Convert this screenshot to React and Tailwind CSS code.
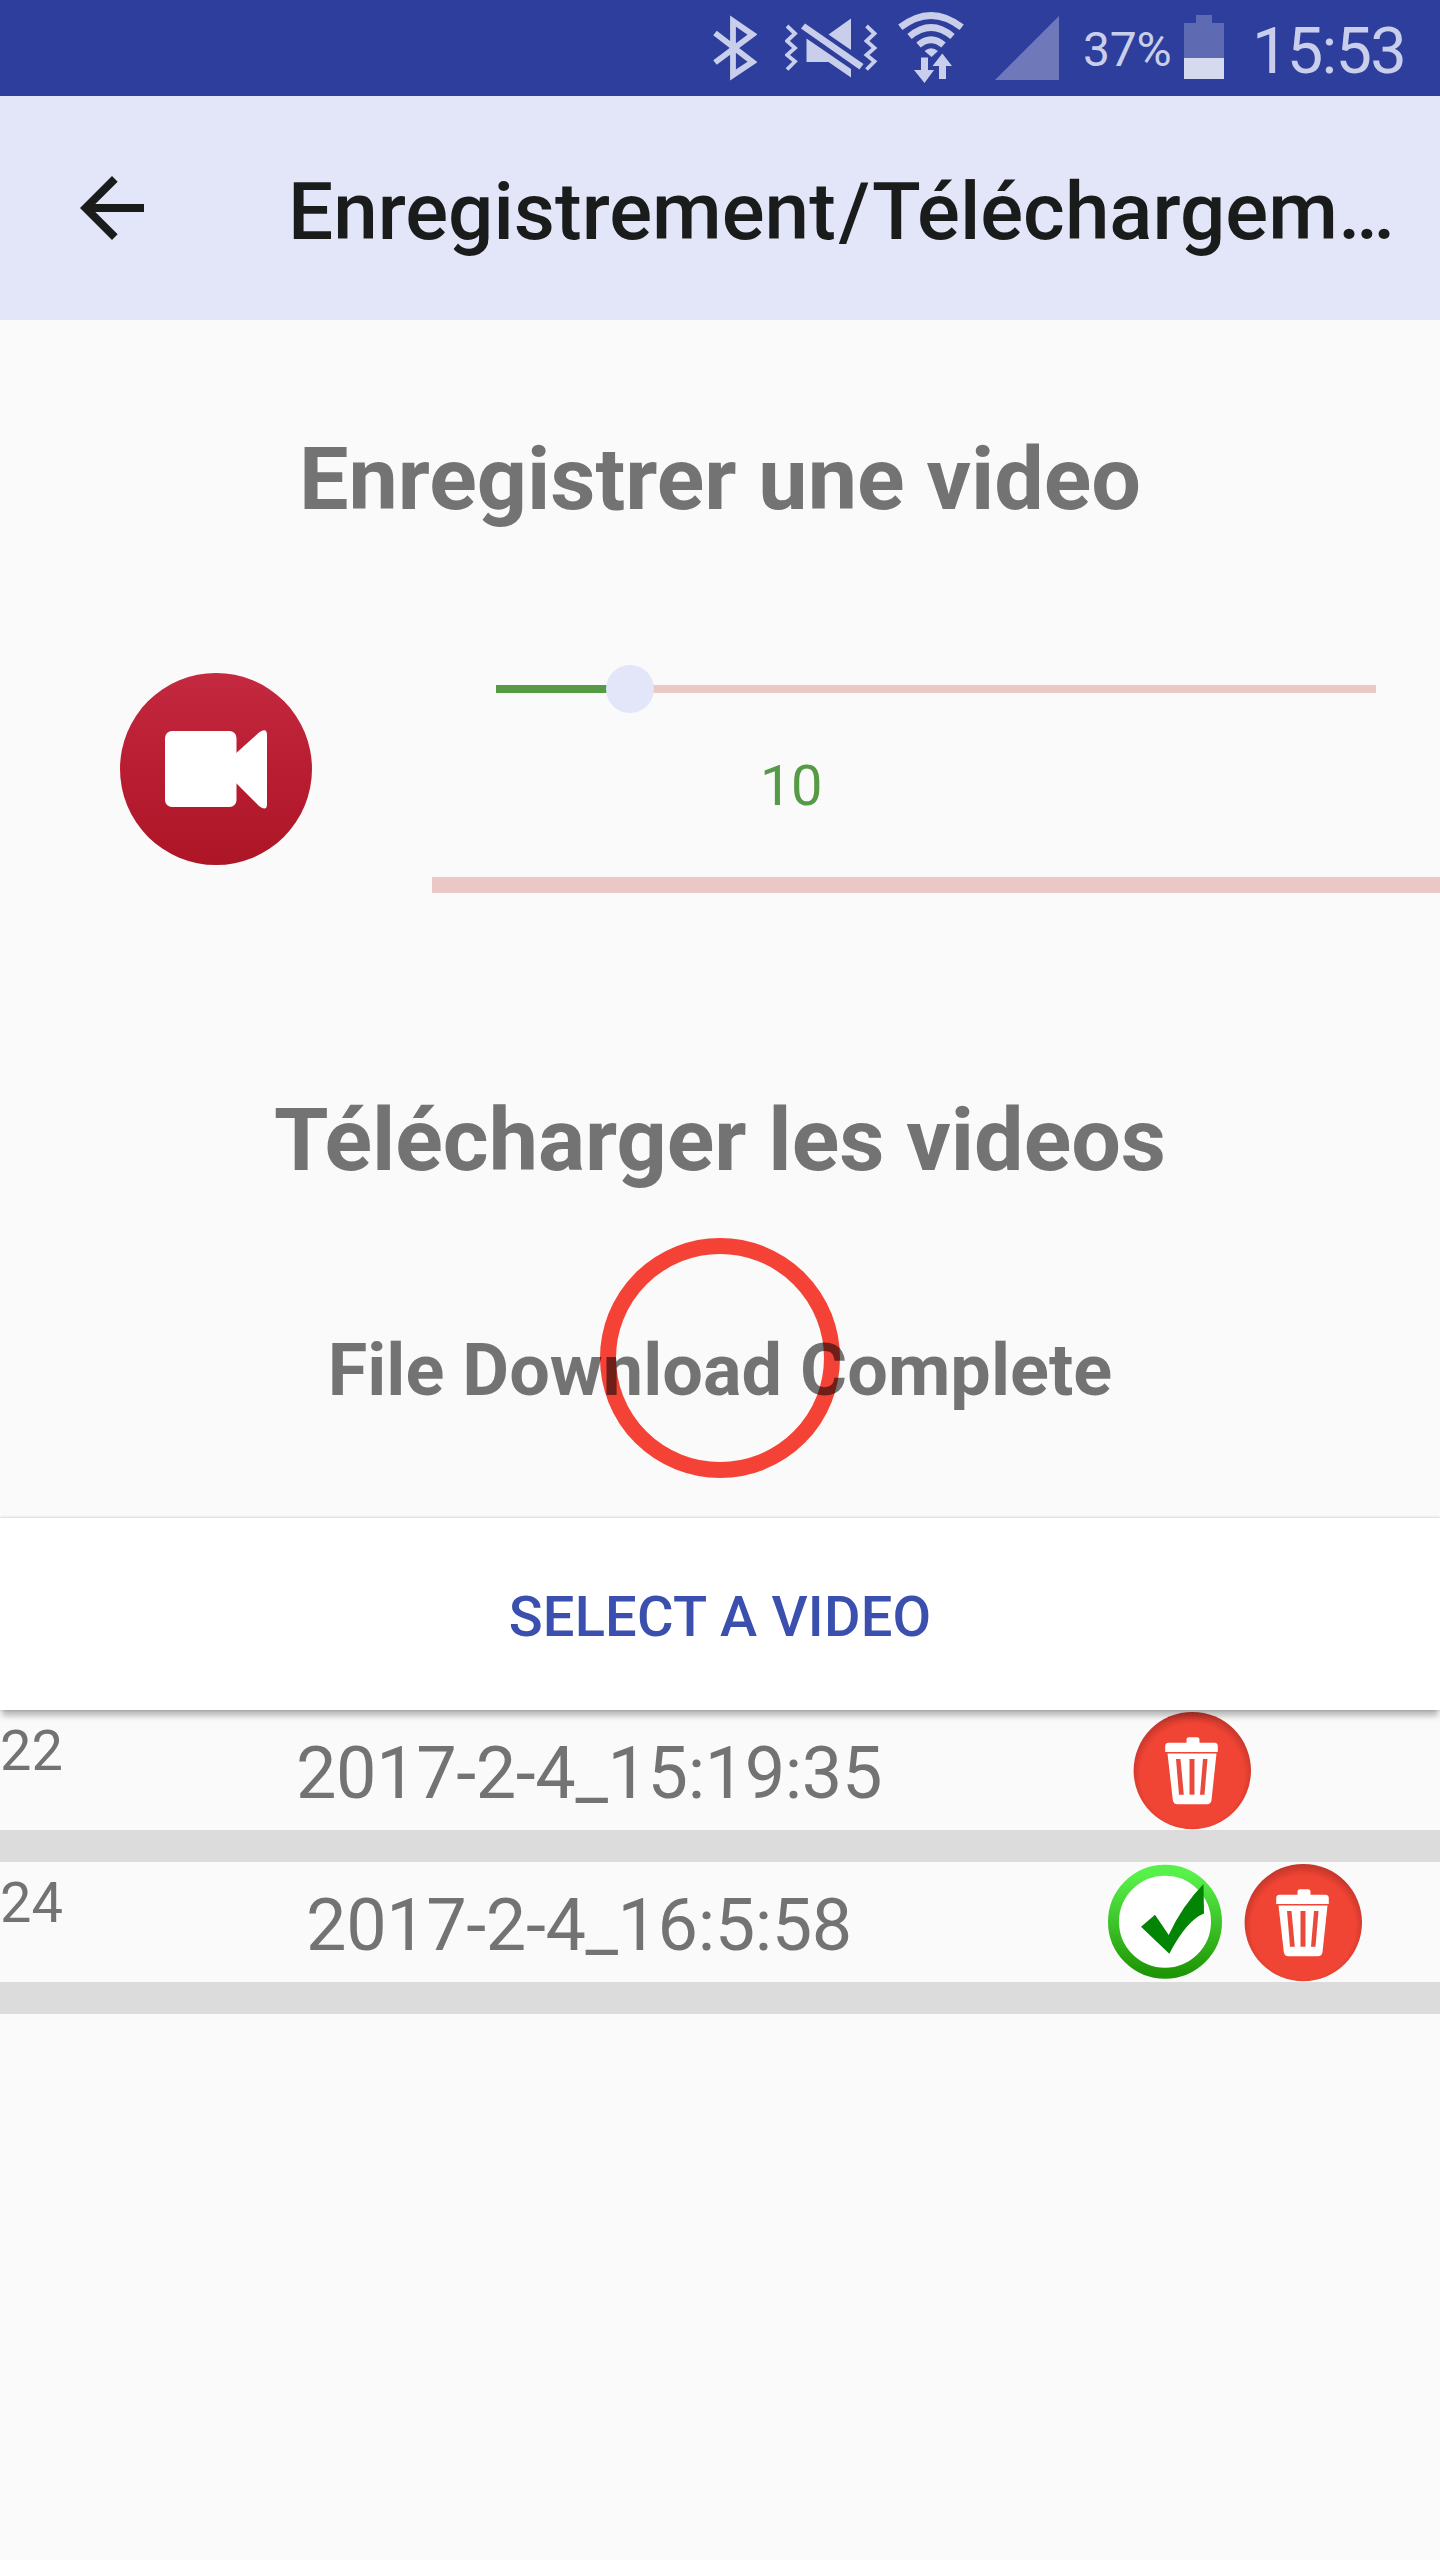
import React from "react";

function BluetoothIcon() {
  return (
    <svg className="h-24 w-[44px]" viewBox="713 0 44 96" fill="none" stroke="#c9cfeb" strokeWidth="5.8" strokeLinejoin="miter">
      <path d="M715 33L752.5 62L733 75V21L752.5 34.5L715 62.5" />
    </svg>
  );
}

function VibrateMuteIcon() {
  return (
    <svg className="ml-[28px] h-24 w-[93px]" viewBox="785 0 93 96" fill="none">
      <g stroke="#c9cfeb" strokeWidth="3.8">
        <path d="M787 26L795 33.5L787 41L795 48L787 55L795 61.5L787 69.5" />
        <path d="M866.500 26L874.500 33.500L866.500 41L874.500 48L866.500 55L874.500 61.500L866.500 69.500" />
      </g>
      <g fill="#c9cfeb">
        <path d="M801 28.500L805 23.500L863.500 64L859.500 69.500Z" />
        <path d="M806.500 38.500L851 69V77.500L828.500 62H806.500Z" />
        <path d="M851 18.500V50L828.500 34.500Z" />
      </g>
    </svg>
  );
}

function WifiIcon() {
  return (
    <svg className="ml-[20px] h-24 w-[66px]" viewBox="898 0 66 96" fill="none">
      <g stroke="#c9cfeb" strokeWidth="6.800">
        <path d="M900.300 27.300Q931 3.500 961.700 27.300" />
        <path d="M909.500 36.500Q931 18.500 952.500 36.500" />
        <path d="M918.500 45Q931 34.500 943.500 45" />
      </g>
      <g fill="#c9cfeb">
        <path d="M924.500 51Q931 45.500 938 51L931.500 57Z" />
        <path d="M921 57.500H928V70H934L924.500 83L914 70H921Z" />
        <path d="M939 79V66H932.500L942.300 53.500L952 66H946V79Z" />
      </g>
    </svg>
  );
}

function StatusBar() {
  return (
    <header className="flex h-24 items-center bg-[#2d3e9d] pl-[713px] text-[#c9cfeb]">
      <BluetoothIcon />
      <VibrateMuteIcon />
      <WifiIcon />
      <svg className="ml-[31px] h-24 w-[64px]" viewBox="995 0 64 96">
        <path d="M995 80L1059 16V80Z" fill="#6f79b9" />
      </svg>
      <span className="ml-[24px] w-[101px] pt-[3px] text-[48px] leading-[60px] tracking-[-0.2px]">37%</span>
      <svg className="h-24 w-10" viewBox="1184 0 40 96">
        <path d="M1184 23H1196V15H1212V23H1224V58H1184Z" fill="#5e6bb2" />
        <path d="M1184 58H1224V79H1184Z" fill="#d5daef" />
      </svg>
      <span className="ml-[28px] pt-[5px] text-[65px] leading-[80px] tracking-[-1.8px]">15:53</span>
    </header>
  );
}

function AppBar() {
  return (
    <div className="flex h-[224px] items-center bg-[#e3e6f9] pl-16 text-[#1a1c1c]">
      <svg className="size-24" viewBox="0 0 24 24" fill="currentColor">
        <path d="M20 11H7.830l5.590-5.590L12 4l-8 8 8 8 1.410-1.410L7.830 13H20v-2z" />
      </svg>
      <h1 className="ml-[128px] pt-[8px] text-[80px] font-medium leading-[96px] whitespace-nowrap">
        Enregistrement<span className="ml-[3px] tracking-[2px]">/</span>Téléchargem…
      </h1>
    </div>
  );
}

function RecordButton() {
  return (
    <svg className="mt-[4px] ml-[120px] size-48 shrink-0" viewBox="0 0 192 192">
      <defs>
        <linearGradient id="record" x1="0" y1="0" x2="0" y2="1">
          <stop offset="0" stopColor="#c3293f" />
          <stop offset="0.5" stopColor="#b91d32" />
          <stop offset="1" stopColor="#ad1626" />
        </linearGradient>
      </defs>
      <circle cx="96" cy="96" r="96" fill="url(#record)" />
      <rect x="45" y="58" width="71.500" height="76" rx="7" fill="#fff" />
      <path d="M114 82L139 59.500Q147 54 147 62V131Q147 139 139 133L114 108Z" fill="#fff" />
    </svg>
  );
}

function Slider({ percent }) {
  return (
    <div className="relative ml-16 flex h-12 w-[880px] items-center">
      <div className="h-2 w-full bg-[#e9c8c6]">
        <div className="h-full bg-[#559a45]" style={{ width: `${percent}%` }} />
      </div>
      <div className="absolute size-12 -translate-x-1/2 rounded-full bg-[#e3e6f9]" style={{ left: `${percent}%` }} />
    </div>
  );
}

function TrashIcon() {
  return (
    <svg className="size-[120px]" viewBox="0 0 120 120">
      <defs>
        <radialGradient id="trash" cx="0.5" cy="0.54" r="0.54">
          <stop offset="0.820" stopColor="#f04434" />
          <stop offset="1" stopColor="#c0352b" />
        </radialGradient>
      </defs>
      <circle cx="60.300" cy="60.600" r="58.700" fill="url(#trash)" />
      <g fill="#fff">
        <path d="M54.500 33V29.500Q54.500 27.300 57 27.300H65Q67.500 27.300 67.500 29.500V33Z" />
        <path d="M36.500 32.700H82.500Q85.500 32.700 85.800 36V42H33.200V36Q33.500 32.700 36.500 32.700Z" />
        <path d="M35.500 43.500H84.500L79.500 90Q78.800 94.300 75 94.300H45.500Q41.500 94.300 40.800 90Z" />
      </g>
      <g fill="#e94a3c">
        <path d="M44 49H48.500L51.800 84.700H47Z" />
        <path d="M57.500 49H62.500V84.700H57.500Z" />
        <path d="M71 49H75.500L72.500 84.700H68Z" />
      </g>
    </svg>
  );
}

function CheckIcon() {
  return (
    <svg className="mr-[18px] size-[120px]" viewBox="0 0 120 120">
      <defs>
        <linearGradient id="check" x1="0" y1="0" x2="0" y2="1">
          <stop offset="0.050" stopColor="#58f04a" />
          <stop offset="1" stopColor="#1f9605" />
        </linearGradient>
      </defs>
      <circle cx="60" cy="59.700" r="51.500" fill="#fff" stroke="url(#check)" strokeWidth="11" />
      <path d="M36 64.700L50 52.700L63.700 73Q77 44 98.500 22L99 51.500Q82 58 64.300 91.700Z" fill="#048404" />
    </svg>
  );
}

const videos = [
  { id: "22", name: "2017-2-4_15:19:35", saved: false, nameClass: "ml-[100px] w-[978px]", actionsClass: "ml-[54px]" },
  { id: "24", name: "2017-2-4_16:5:58", saved: true, nameClass: "ml-[100px] w-[958px]", actionsClass: "ml-[47px]" },
];

function VideoRow({ video }) {
  return (
    <li className="flex h-[152px] items-start border-b-[32px] border-[#dcdcdc] text-[#737373]">
      <span className="-mr-[100px] w-[100px] pt-[9px] text-[56px] leading-[64px]">{video.id}</span>
      <span className={`${video.nameClass} pt-[22px] text-center text-[72px] leading-[84px] tracking-[-0.4px]`}>
        {video.name}
      </span>
      <div className={`${video.actionsClass} flex`}>
        {video.saved && <CheckIcon />}
        <TrashIcon />
      </div>
    </li>
  );
}

export default function App() {
  return (
    <div className="flex h-[2560px] w-[1440px] flex-col overflow-hidden bg-[#fafafa] font-['Roboto',sans-serif]">
      <StatusBar />
      <AppBar />
      <h2 className="mt-[107px] text-center text-[88px] font-bold leading-[104px] text-[#737373]">Enregistrer une video</h2>
      <section className="mt-[134px] flex h-[228px] items-start">
        <div className="flex w-[432px] pt-[4px]">
          <RecordButton />
        </div>
        <div className="flex h-[228px] flex-1 flex-col">
          <Slider percent={15.2} />
          <p className="mt-[41px] w-[718px] text-center text-[56px] leading-[64px] tracking-[-0.5px] text-[#559a45]">10</p>
          <div className="mt-[59px] h-4 bg-[#e9c8c6]" />
        </div>
      </section>
      <h2 className="mt-[195px] text-center text-[88px] font-bold leading-[104px] text-[#737373]">Télécharger les videos</h2>
      <div className="relative mt-[46px] h-[240px]">
        <div className="mx-auto size-[240px] rounded-full border-[16px] border-[#f44336]" />
        <p className="absolute inset-x-0 top-[91px] text-center text-[72px] font-bold leading-[84px] tracking-[0.05px] text-black/54">
          File Download Complete
        </p>
      </div>
      <button className="relative z-10 mt-[40px] h-48 w-full shrink-0 bg-white pt-[6px] text-[56px] font-medium leading-[64px] tracking-[0.2px] text-[#3a4fae] shadow-[0_8px_6px_-2px_rgba(0,0,0,0.26),0_0_3px_rgba(0,0,0,0.25)]">
        SELECT A VIDEO
      </button>
      <ul>
        {videos.map((video) => (
          <VideoRow key={video.id} video={video} />
        ))}
      </ul>
    </div>
  );
}
